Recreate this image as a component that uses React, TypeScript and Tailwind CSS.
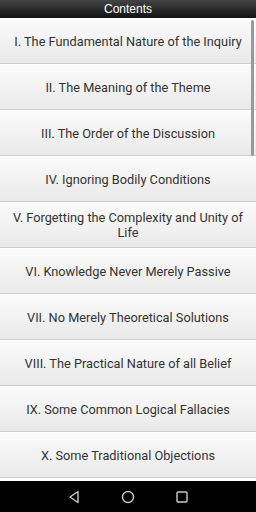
import React from 'react';

const chapters = [
  'I. The Fundamental Nature of the Inquiry',
  'II. The Meaning of the Theme',
  'III. The Order of the Discussion',
  'IV. Ignoring Bodily Conditions',
  'V. Forgetting the Complexity and Unity of Life',
  'VI. Knowledge Never Merely Passive',
  'VII. No Merely Theoretical Solutions',
  'VIII. The Practical Nature of all Belief',
  'IX. Some Common Logical Fallacies',
  'X. Some Traditional Objections',
];

export default function App() {
  return (
    <div className="w-[256px] h-[512px] flex flex-col bg-white overflow-hidden font-['Roboto',sans-serif]">
      <div className="h-[18px] shrink-0 flex items-center justify-center bg-gradient-to-b from-[#444444] to-[#141414]">
        <span className="text-white text-[12px] font-['Liberation_Sans',sans-serif] leading-none">Contents</span>
      </div>
      <div className="relative flex-1 flex flex-col overflow-hidden">
        {chapters.map((c) => (
          <div
            key={c}
            className="h-[46px] shrink-0 flex items-center justify-center px-3 text-center border-t border-t-white border-b border-b-[#cfcfcf] bg-gradient-to-b from-[#fbfbfb] to-[#e9e9e9]"
          >
            <span className="text-[#333333] text-[12.75px] leading-[15px]">{c}</span>
          </div>
        ))}
        <div className="absolute right-[2px] top-[2px] w-[3px] h-[136px] rounded-full bg-[#9a9a9a]" />
      </div>
      <div className="h-[31px] shrink-0 bg-black flex items-center justify-center gap-[38px]">
        <svg width="16" height="16" viewBox="0 0 16 16" fill="none" stroke="#c8c8c8" strokeWidth="1.4">
          <path d="M12 2.5 L4 8 L12 13.5 Z" strokeLinejoin="round" />
        </svg>
        <svg width="16" height="16" viewBox="0 0 16 16" fill="none" stroke="#c8c8c8" strokeWidth="1.4">
          <circle cx="8" cy="8" r="5.5" />
        </svg>
        <svg width="16" height="16" viewBox="0 0 16 16" fill="none" stroke="#c8c8c8" strokeWidth="1.4">
          <rect x="3" y="3" width="10" height="10" rx="1" />
        </svg>
      </div>
    </div>
  );
}
